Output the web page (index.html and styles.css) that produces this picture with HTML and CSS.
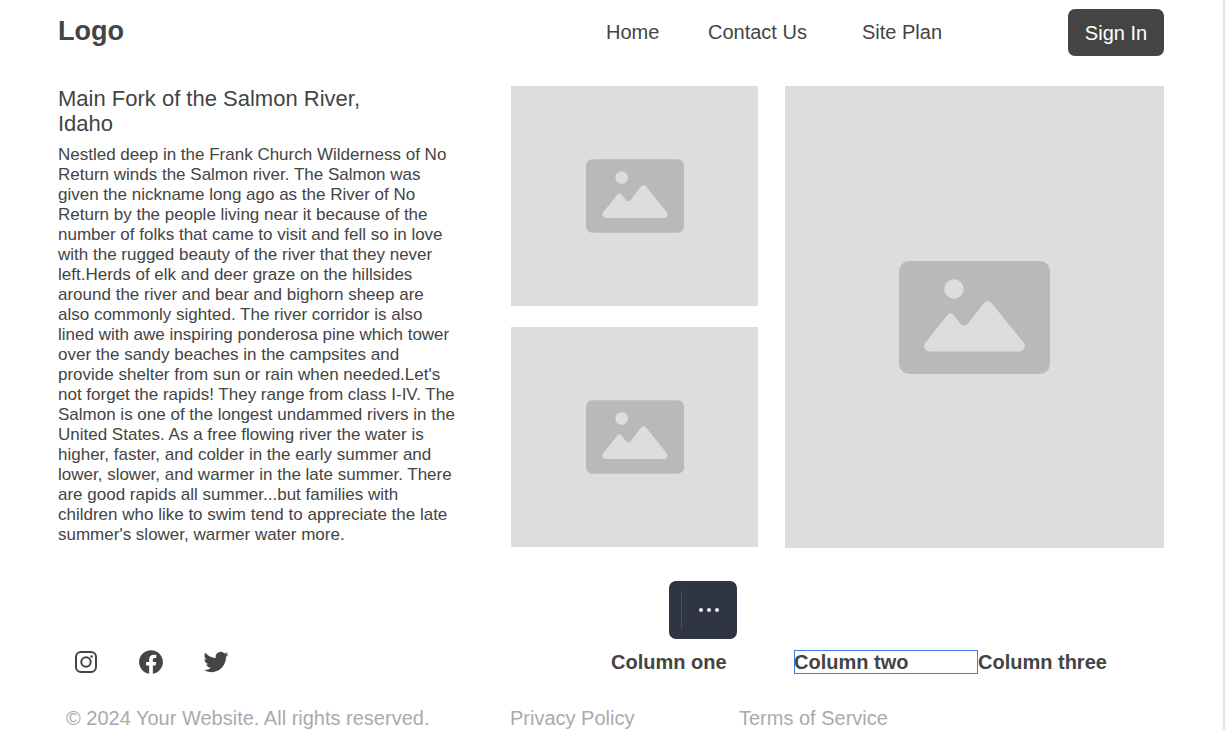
FILE: index.html
```html
<!DOCTYPE html>
<html lang="en">
<head>
<meta charset="utf-8">
<meta name="viewport" content="width=device-width, initial-scale=1">
<title>Main Fork of the Salmon River, Idaho</title>
<link rel="stylesheet" href="styles.css">
</head>
<body>
<svg class="defs" aria-hidden="true">
  <symbol id="picture" viewBox="0 0 151 113">
    <rect width="151" height="113" rx="10" fill="#b9b9b9"/>
    <circle cx="55" cy="28" r="9.7" fill="#dddddd"/>
    <path d="M26.500 81.500L48.500 54Q51.500 50.500 54.500 54L62 63Q65 66 68.500 63L85 42Q88.500 38 92.500 42L124.500 81.500Q127 85 124.700 88Q123 90.500 120 90.500H31Q27.500 90.500 25.700 87.500Q24.200 84.500 26.500 81.500Z" fill="#dddddd"/>
  </symbol>
</svg>
<div class="page">
  <header class="header">
    <a class="logo" href="#">Logo</a>
    <nav class="nav">
      <a href="#">Home</a>
      <a href="#">Contact Us</a>
      <a href="#">Site Plan</a>
    </nav>
    <button class="sign-in" type="button">Sign In</button>
  </header>

  <main class="main">
    <article class="story">
      <h1>Main Fork of the Salmon River,<br>Idaho</h1>
      <p>Nestled deep in the Frank Church Wilderness of No Return winds the Salmon river. The Salmon was given the nickname long ago as the River of No Return by the people living near it because of the number of folks that came to visit and fell so in love with the rugged beauty of the river that they never left.Herds of elk and deer graze on the hillsides around the river and bear and bighorn sheep are also commonly sighted. The river corridor is also lined with awe inspiring ponderosa pine which tower over the sandy beaches in the campsites and provide shelter from sun or rain when needed.Let's not forget the rapids! They range from class I-IV. The Salmon is one of the longest undammed rivers in the United States. As a free flowing river the water is higher, faster, and colder in the early summer and lower, slower, and warmer in the late summer. There are good rapids all summer...but families with children who like to swim tend to appreciate the late summer's slower, warmer water more.</p>
    </article>
    <div class="stack">
      <div class="photo"><svg class="picture"><use href="#picture"/></svg></div>
      <div class="photo"><svg class="picture"><use href="#picture"/></svg></div>
    </div>
    <div class="photo photo-large"><svg class="picture picture-large"><use href="#picture"/></svg></div>
  </main>

  <footer class="footer">
    <button class="toolbar" type="button" aria-label="More options">
      <span class="divider"></span>
      <span class="dots"><i></i><i></i><i></i></span>
    </button>
    <div class="footer-top">
      <div class="social">
        <a href="#" aria-label="Instagram"><svg viewBox="0 0 26 26" fill="none" stroke="#444444" stroke-width="2"><rect x="3" y="3" width="20" height="20" rx="5"/><circle cx="13" cy="13" r="4.700"/><circle cx="18.600" cy="7.500" r="1.300" fill="#444444" stroke="none"/></svg></a>
        <a href="#" aria-label="Facebook"><svg viewBox="0 0 24 24" fill="#444444"><path d="M23 12.060C23 5.980 18.080 1.060 12 1.060S1 5.980 1 12.060c0 5.490 4.020 10.040 9.280 10.870v-7.690H7.490v-3.180h2.790V9.640c0-2.760 1.640-4.280 4.150-4.280 1.210 0 2.470.22 2.470.22v2.710h-1.390c-1.370 0-1.790.85-1.790 1.720v2.050h3.050l-.49 3.180h-2.560v7.690C18.980 22.100 23 17.550 23 12.060z"/></svg></a>
        <a href="#" aria-label="Twitter"><svg viewBox="-0.500 -0.500 25 25" fill="#444444"><path d="M23.950 4.570a10 10 0 0 1-2.820.77 4.960 4.960 0 0 0 2.160-2.720c-.95.560-2 .960-3.130 1.190a4.920 4.920 0 0 0-8.390 4.480C7.690 8.090 4.070 6.130 1.640 3.160a4.820 4.820 0 0 0-.67 2.480c0 1.710.87 3.210 2.190 4.100a4.900 4.900 0 0 1-2.230-.62v.06a4.920 4.920 0 0 0 3.950 4.830 5 5 0 0 1-2.210.080 4.940 4.940 0 0 0 4.600 3.420A9.870 9.870 0 0 1 0 19.540a13.990 13.990 0 0 0 7.560 2.210c9.050 0 14-7.500 14-13.980 0-.210 0-.420-.020-.630a9.940 9.940 0 0 0 2.410-2.570z"/></svg></a>
      </div>
      <div class="columns">
        <h2>Column one</h2>
        <h2 class="selected">Column two</h2>
        <h2>Column three</h2>
      </div>
    </div>
    <div class="legal">
      <span>© 2024 Your Website. All rights reserved.</span>
      <a href="#">Privacy Policy</a>
      <a href="#">Terms of Service</a>
    </div>
  </footer>
</div>
</body>
</html>
```
FILE: styles.css
```css
* {
  box-sizing: border-box;
}

body {
  margin: 0;
  background: #ffffff;
  color: #444444;
  font-family: "Liberation Sans", Arial, sans-serif;
  font-size: 20px;
  line-height: 24px;
}

a {
  color: inherit;
  text-decoration: none;
}

h1,
h2,
p {
  margin: 0;
}

.defs {
  position: absolute;
  width: 0;
  height: 0;
}

.page {
  min-height: 100vh;
  padding: 9px 59px 0 58px;
  border-right: 2px solid #e4e4e4;
}

.header {
  display: grid;
  grid-template-columns: 548fr 462fr 96px;
  align-items: center;
}

.logo {
  padding-bottom: 4px;
  font-size: 27px;
  font-weight: bold;
}

.nav {
  display: grid;
  grid-template-columns: 102fr 154fr 206fr;
  padding-bottom: 2px;
}

.sign-in {
  height: 47px;
  padding: 0;
  border: 0;
  border-radius: 7px;
  background: #444444;
  color: #ffffff;
  font: inherit;
}

.main {
  display: grid;
  grid-template-columns: 426fr 247fr 379fr;
  gap: 27px;
  margin-top: 30px;
}

.story h1 {
  font-size: 22px;
  font-weight: normal;
  line-height: 25px;
}

.story p {
  max-width: 400px;
  margin-top: 9px;
  font-size: 17px;
  line-height: 20px;
}

.stack {
  display: grid;
  align-content: start;
  gap: 21px;
}

.photo {
  display: flex;
  align-items: center;
  justify-content: center;
  min-height: 220px;
  background: #dddddd;
}

.photo-large {
  min-height: 462px;
}

.picture {
  width: 98px;
  height: 74px;
}

.picture-large {
  width: 151px;
  height: 113px;
}

.footer {
  position: relative;
  padding-top: 101px;
}

.toolbar {
  position: absolute;
  top: 33px;
  left: 611px;
  display: flex;
  align-items: center;
  gap: 17px;
  width: 68px;
  height: 58px;
  padding: 0 12px;
  border: 0;
  border-radius: 7px;
  background: #2f3542;
}

.divider {
  width: 1px;
  height: 38px;
  background: #4b505b;
}

.dots {
  display: flex;
  gap: 4px;
}

.dots i {
  width: 4px;
  height: 4px;
  border-radius: 50%;
  background: #eeeeee;
}

.footer-top {
  display: grid;
  grid-template-columns: 553fr 553fr;
  align-items: center;
}

.social {
  display: flex;
  gap: 39px;
  padding-left: 15px;
}

.social a {
  display: flex;
}

.social svg {
  width: 26px;
  height: 26px;
}

.columns {
  display: grid;
  grid-template-columns: 183fr 184fr 186fr;
}

.columns h2 {
  font-size: 20px;
  line-height: 24px;
}

.selected {
  outline: 1px solid #3f7ee8;
  outline-offset: -1px;
}

.legal {
  display: grid;
  grid-template-columns: 444fr 229fr 425fr;
  margin-top: 31px;
  padding-left: 8px;
  color: #aaaaaa;
}
```
